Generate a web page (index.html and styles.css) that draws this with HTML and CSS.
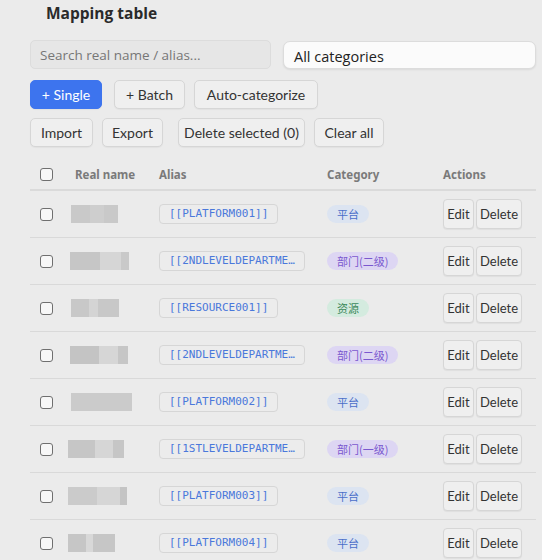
FILE: index.html
```html
<!DOCTYPE html>
<html lang="en">
<head>
<meta charset="utf-8">
<title>Mapping table</title>
<link rel="stylesheet" href="styles.css">
</head>
<body>
<div class="panel">
  <h2 class="title">Mapping table</h2>

  <div class="filters">
    <input class="search" type="text" placeholder="Search real name / alias...">
    <div class="select">All categories</div>
  </div>

  <div class="toolbar">
    <button class="btn btn-primary btn-single">+ Single</button>
    <button class="btn btn-batch">+ Batch</button>
    <button class="btn btn-auto">Auto-categorize</button>
  </div>
  <div class="toolbar">
    <button class="btn btn-import">Import</button>
    <button class="btn btn-export">Export</button>
    <button class="btn btn-delsel">Delete selected (0)</button>
    <button class="btn btn-clear">Clear all</button>
  </div>

  <div class="table">
    <div class="row head">
      <span class="box"></span>
      <span class="th th-name">Real name</span>
      <span class="th">Alias</span>
      <span class="th">Category</span>
      <span class="th">Actions</span>
    </div>

    <div class="row">
      <span class="box"></span>
      <span class="masked m1"></span>
      <span class="cell"><span class="alias">[[PLATFORM001]]</span></span>
      <span class="cell"><span class="pill pill-blue">平台</span></span>
      <span class="cell actions"><button class="act">Edit</button><button class="act">Delete</button></span>
    </div>
    <div class="row">
      <span class="box"></span>
      <span class="masked m2"></span>
      <span class="cell"><span class="alias" title="[[2NDLEVELDEPARTMENT001]]">[[2NDLEVELDEPARTME…</span></span>
      <span class="cell"><span class="pill pill-purple">部门(二级)</span></span>
      <span class="cell actions"><button class="act">Edit</button><button class="act">Delete</button></span>
    </div>
    <div class="row">
      <span class="box"></span>
      <span class="masked m3"></span>
      <span class="cell"><span class="alias">[[RESOURCE001]]</span></span>
      <span class="cell"><span class="pill pill-green">资源</span></span>
      <span class="cell actions"><button class="act">Edit</button><button class="act">Delete</button></span>
    </div>
    <div class="row">
      <span class="box"></span>
      <span class="masked m4"></span>
      <span class="cell"><span class="alias" title="[[2NDLEVELDEPARTMENT002]]">[[2NDLEVELDEPARTME…</span></span>
      <span class="cell"><span class="pill pill-purple">部门(二级)</span></span>
      <span class="cell actions"><button class="act">Edit</button><button class="act">Delete</button></span>
    </div>
    <div class="row">
      <span class="box"></span>
      <span class="masked m5"></span>
      <span class="cell"><span class="alias">[[PLATFORM002]]</span></span>
      <span class="cell"><span class="pill pill-blue">平台</span></span>
      <span class="cell actions"><button class="act">Edit</button><button class="act">Delete</button></span>
    </div>
    <div class="row">
      <span class="box"></span>
      <span class="masked m6"></span>
      <span class="cell"><span class="alias" title="[[1STLEVELDEPARTMENT001]]">[[1STLEVELDEPARTME…</span></span>
      <span class="cell"><span class="pill pill-purple">部门(一级)</span></span>
      <span class="cell actions"><button class="act">Edit</button><button class="act">Delete</button></span>
    </div>
    <div class="row">
      <span class="box"></span>
      <span class="masked m7"></span>
      <span class="cell"><span class="alias">[[PLATFORM003]]</span></span>
      <span class="cell"><span class="pill pill-blue">平台</span></span>
      <span class="cell actions"><button class="act">Edit</button><button class="act">Delete</button></span>
    </div>
    <div class="row">
      <span class="box"></span>
      <span class="masked m8"></span>
      <span class="cell"><span class="alias">[[PLATFORM004]]</span></span>
      <span class="cell"><span class="pill pill-blue">平台</span></span>
      <span class="cell actions"><button class="act">Edit</button><button class="act">Delete</button></span>
    </div>
  </div>
</div>
</body>
</html>
```

FILE: styles.css
```css
* { box-sizing: border-box; }

html, body {
  margin: 0;
  background: #ebebeb;
  height: 100%;
  overflow: hidden;
}

body {
  font-family: "Open Sans", "Noto Sans", "Noto Sans CJK SC", sans-serif;
  color: #333;
}

.panel {
  padding: 0 6px 0 30px;
}

.title {
  margin: 0;
  padding: 3px 0 0 16px;
  height: 40px;
  font-size: 15.5px;
  font-weight: 700;
  color: #2a2a2a;
  line-height: 20px;
}

/* search + category filter */
.filters {
  display: flex;
  gap: 12px;
  align-items: flex-start;
}

.search {
  width: 241px;
  height: 29px;
  margin: 0;
  padding: 0 9px;
  border: 1px solid #dcdcdc;
  border-radius: 5px;
  background: #e6e6e6;
  font: 13.5px "Open Sans", "Noto Sans", sans-serif;
  color: #444;
  outline: none;
}
.search::placeholder { color: #767676; }

.select {
  flex: 1;
  height: 28px;
  margin-top: 1px;
  padding: 3px 10px 0;
  border: 1px solid #dcdcdc;
  border-radius: 7px;
  background: #fbfbfb;
  box-shadow: 0 1px 2px rgba(0,0,0,0.08);
  font-size: 14.5px;
  line-height: 24px;
  color: #222;
  overflow: hidden;
}

/* action buttons */
.toolbar {
  display: flex;
  gap: 9px;
  margin-top: 11px;
}
.toolbar + .toolbar { margin-top: 9px; }

.btn {
  height: 29px;
  padding: 0;
  border: 1px solid #d6d6d6;
  border-radius: 5px;
  background: #efefef;
  font: 14px Lato, "Open Sans", sans-serif;
  color: #333;
  white-space: nowrap;
  box-shadow: 0 1px 1px rgba(0,0,0,0.04);
}
.btn-primary {
  background: #3d74ee;
  border-color: #3d74ee;
  color: #fff;
}
.btn-single { width: 72px; margin-right: 3px; }
.btn-batch { width: 71px; }
.btn-auto { width: 124px; }
.btn-import { width: 63px; }
.btn-export { width: 61px; margin-right: 6px; }
.btn-delsel { width: 127px; }
.btn-clear { width: 70px; }

/* table */
.table {
  margin-top: 10px;
}

.row {
  display: grid;
  grid-template-columns: 31px 88px 168px 116px 1fr;
  align-items: center;
  height: 47px;
  padding-left: 10px;
  border-bottom: 1px solid #d9d9d9;
}
.row.head {
  height: 34px;
  border-bottom: 2px solid #dadada;
  padding-top: 3px;
}

.cell {
  display: flex;
  align-items: center;
}

.box {
  width: 13px;
  height: 13px;
  border: 1px solid #6f6f6f;
  border-radius: 3px;
  background: #f7f7f7;
}

.th {
  font-family: "Noto Sans", "Open Sans", sans-serif;
  font-size: 11.5px;
  font-weight: 700;
  color: #7a7a7a;
}
.th-name { padding-left: 4px; }

/* names are redacted as blurred blocks */
.masked {
  display: block;
  height: 18px;
  background: #c9c9c9;
}
.m1 { width: 47px; background: linear-gradient(90deg, #c9c9c9 0 40%, #cecece 40% 70%, #c9c9c9 70%); }
.m2 { width: 59px; margin-left: -1px; background: linear-gradient(90deg, #c6c6c6 0 51%, #d6d6d6 51% 86%, #c9c9c9 86%); }
.m3 { width: 48px; background: linear-gradient(90deg, #c8c8c8 0 38%, #d4d4d4 38% 56%, #c8c8c8 56%); }
.m4 { width: 58px; margin-left: -1px; background: linear-gradient(90deg, #c4c4c4 0 50%, #d6d6d6 50% 83%, #c6c6c6 83%); }
.m5 { width: 61px; background: #cbcbcb; }
.m6 { width: 56px; margin-left: -3px; background: linear-gradient(90deg, #c6c6c6 0 48%, #d6d6d6 48% 80%, #c6c6c6 80%); }
.m7 { width: 59px; margin-left: -3px; background: linear-gradient(90deg, #cbcbcb 0 50%, #d6d6d6 50% 88%, #c4c4c4 88%); }
.m8 { width: 47px; margin-left: -3px; background: linear-gradient(90deg, #c6c6c6 0 38%, #d8d8d8 38% 53%, #c6c6c6 53%); }

.alias {
  display: inline-block;
  height: 20px;
  padding: 0 9px;
  border: 1px solid #d6d6d6;
  border-radius: 4px;
  background: #ececec;
  font-family: "DejaVu Sans Mono", monospace;
  font-size: 11px;
  line-height: 18px;
  color: #4a78db;
  white-space: nowrap;
}

.pill {
  display: inline-flex;
  align-items: center;
  height: 18px;
  padding: 0 10px;
  border-radius: 9px;
  font-family: "Noto Sans CJK SC", sans-serif;
  font-size: 11px;
  line-height: 1;
}
.pill-blue { background: #dce4f1; color: #4a6fc9; }
.pill-purple { background: #ddd6f3; color: #7a58cf; }
.pill-green { background: #d4ebdf; color: #3d8a5c; }

.actions {
  gap: 2px;
}

.act {
  height: 30px;
  padding: 0;
  border: 1px solid #d6d6d6;
  border-radius: 4px;
  background: #efefef;
  font: 13px Lato, "Open Sans", sans-serif;
  color: #333;
  box-shadow: 0 1px 1px rgba(0,0,0,0.05);
}
.act:first-child { width: 31px; }
.act:last-child { width: 46px; }
```
